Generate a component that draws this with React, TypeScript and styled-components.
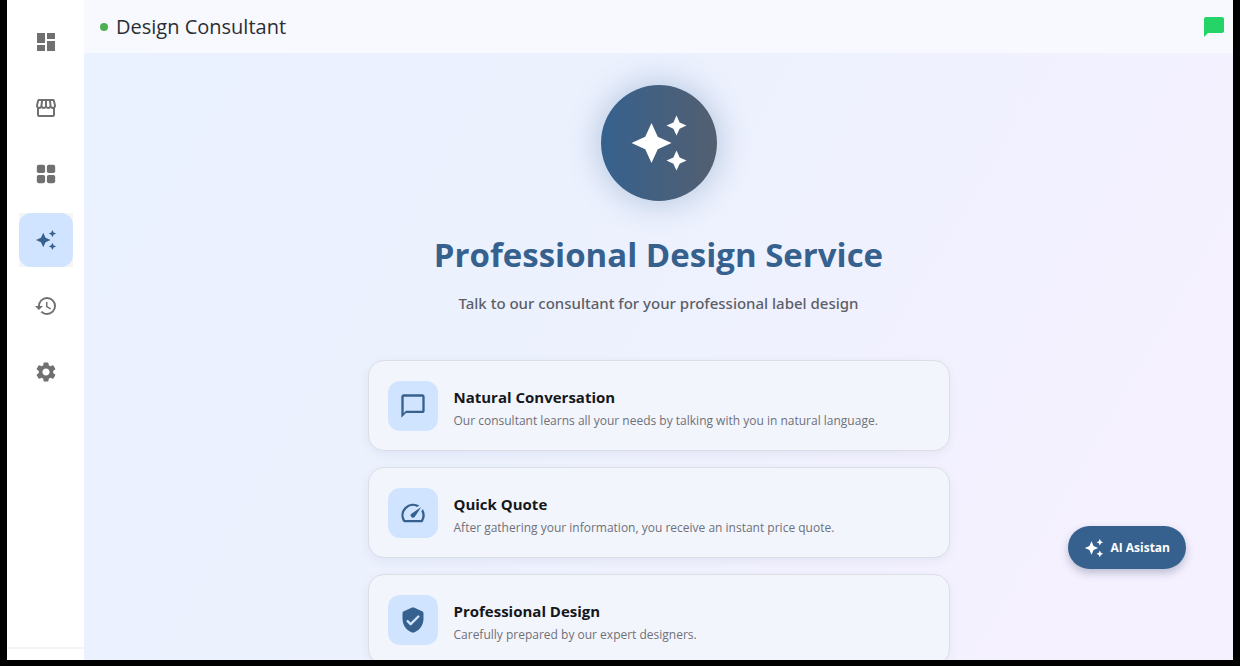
import React from "react";
import styled, { createGlobalStyle, css } from "styled-components";
import {
  MdDashboard,
  MdOutlineStorefront,
  MdAutoAwesome,
  MdHistory,
  MdSettings,
  MdChatBubble,
  MdChatBubbleOutline,
  MdSpeed,
} from "react-icons/md";

const GlobalStyle = createGlobalStyle`
  * { box-sizing: border-box; }
  body {
    margin: 0;
    background: #000;
    font-family: "Open Sans", "Noto Sans", sans-serif;
    color: #191c20;
  }
  h1, h2, h3, p, ul { margin: 0; padding: 0; }
`;

const Frame = styled.div`
  height: 100vh;
  padding: 0 7px 6px;
  background: #000;
`;

const Shell = styled.div`
  position: relative;
  display: flex;
  height: 100%;
  background: #fff;
`;

const Sidebar = styled.nav`
  flex: none;
  display: flex;
  flex-direction: column;
  justify-content: space-between;
  width: 77px;
  padding-top: 15px;
  background: #fff;
`;

const NavList = styled.ul`
  display: flex;
  flex-direction: column;
  align-items: center;
  gap: 12px;
  list-style: none;
`;

const NavItem = styled.li<{ $active?: boolean }>`
  display: flex;
  background: ${(p) => (p.$active ? "#f5f5f5" : "transparent")};
`;

const NavButton = styled.button<{ $active?: boolean }>`
  display: flex;
  align-items: center;
  justify-content: center;
  width: 54px;
  height: 54px;
  padding: 0;
  border: 0;
  border-radius: 12px;
  background: transparent;
  color: #707070;
  cursor: pointer;
  ${(p) =>
    p.$active &&
    css`
      background: #d1e4ff;
      color: #36618e;
    `}
`;

const SidebarFooter = styled.div`
  height: 13px;
  border-top: 2px solid #f3f3f3;
`;

const Content = styled.div`
  flex: 1;
  min-width: 0;
  display: flex;
  flex-direction: column;
`;

const Header = styled.header`
  flex: none;
  display: flex;
  align-items: center;
  justify-content: space-between;
  height: 53px;
  padding: 0 7px 0 16px;
  background: #f8f9ff;
`;

const HeaderTitle = styled.h2`
  display: flex;
  align-items: center;
  gap: 8px;
  font-size: 20px;
  line-height: 28px;
  font-weight: 400;
  color: #2b2e33;
`;

const StatusDot = styled.span`
  width: 8px;
  height: 8px;
  border-radius: 50%;
  background: #4caf50;
`;

const ChatButton = styled.button`
  display: flex;
  padding: 0;
  border: 0;
  background: none;
  color: #25d366;
  cursor: pointer;
`;

const Main = styled.main`
  flex: 1;
  min-height: 0;
  overflow-y: auto;
  scrollbar-width: none;
  display: flex;
  flex-direction: column;
  align-items: center;
  padding: 32px 24px 0;
  background: linear-gradient(120deg, #eaf1ff 0%, #edf1fe 45%, #f5f1ff 85%, #f5f1ff 100%);
`;

const HeroBadge = styled.div`
  flex: none;
  display: flex;
  align-items: center;
  justify-content: center;
  width: 116px;
  height: 116px;
  border-radius: 50%;
  background: linear-gradient(90deg, #36618e, #535f70);
  box-shadow: 0 0 30px 4px rgba(54, 108, 150, 0.28);
  color: #fff;
`;

const HeroTitle = styled.h1`
  margin-top: 32px;
  font-size: 33px;
  line-height: 44px;
  font-weight: 700;
  color: #36618e;
  text-align: center;
`;

const HeroText = styled.p`
  margin-top: 14px;
  font-family: "Noto Sans", "Open Sans", sans-serif;
  font-size: 15px;
  line-height: 24px;
  font-weight: 500;
  color: #5c5f66;
  text-align: center;
`;

const FeatureList = styled.ul`
  display: flex;
  flex-direction: column;
  gap: 16px;
  width: 100%;
  max-width: 582px;
  margin-top: 45px;
  padding-bottom: 32px;
  list-style: none;
`;

const FeatureCard = styled.li`
  display: flex;
  align-items: center;
  gap: 16px;
  height: 91px;
  padding: 0 19px;
  border: 1px solid #dcdee6;
  border-radius: 16px;
  background: #f3f5fd;
  box-shadow: 0 3px 10px rgba(60, 70, 110, 0.07);
`;

const FeatureIcon = styled.span`
  flex: none;
  display: flex;
  align-items: center;
  justify-content: center;
  width: 50px;
  height: 50px;
  border-radius: 12px;
  background: #d1e4ff;
  color: #36618e;
`;

const FeatureBody = styled.div`
  display: flex;
  flex-direction: column;
  gap: 2px;
  padding-top: 4px;
`;

const FeatureTitle = styled.h3`
  font-size: 15px;
  line-height: 24px;
  font-weight: 700;
  color: #15171b;
`;

const FeatureText = styled.p`
  font-size: 12px;
  line-height: 20px;
  color: #6e7178;
`;

const AssistantButton = styled.button`
  position: absolute;
  right: 47px;
  bottom: 91px;
  display: flex;
  align-items: center;
  gap: 6px;
  height: 43px;
  padding: 0 16px;
  border: 0;
  border-radius: 22px;
  background: #36618e;
  box-shadow: 0 4px 8px rgba(40, 50, 90, 0.28);
  color: #fff;
  font-family: inherit;
  font-size: 12px;
  font-weight: 700;
  cursor: pointer;
`;

function TilesIcon() {
  return (
    <svg width="22" height="22" viewBox="0 0 24 24" fill="currentColor" aria-hidden="true">
      <rect x="2" y="2" width="9" height="9" rx="2" />
      <rect x="13" y="2" width="9" height="9" rx="2" />
      <rect x="2" y="13" width="9" height="9" rx="2" />
      <rect x="13" y="13" width="9" height="9" rx="2" />
    </svg>
  );
}

function ShieldIcon() {
  return (
    <svg width="28" height="28" viewBox="0 0 24 24" fill="currentColor" aria-hidden="true">
      <path d="M11.19 1.36l-7 3.11C3.47 4.79 3 5.51 3 6.3V11c0 5.55 3.84 10.74 9 12 5.16-1.26 9-6.45 9-12V6.3c0-.79-.47-1.51-1.19-1.83l-7-3.11c-.51-.23-1.11-.23-1.62 0zm-1.9 14.93L6.7 13.7a.996.996 0 111.41-1.41L10 14.17l5.88-5.88a.996.996 0 111.41 1.41l-6.59 6.59a.996.996 0 01-1.41 0z" />
    </svg>
  );
}

const navItems = [
  { label: "Dashboard", icon: <MdDashboard size={24} /> },
  { label: "Store", icon: <MdOutlineStorefront size={24} /> },
  { label: "Catalog", icon: <TilesIcon /> },
  { label: "Design consultant", icon: <MdAutoAwesome size={22} />, active: true },
  { label: "History", icon: <MdHistory size={24} /> },
  { label: "Settings", icon: <MdSettings size={24} /> },
];

const features = [
  {
    title: "Natural Conversation",
    text: "Our consultant learns all your needs by talking with you in natural language.",
    icon: <MdChatBubbleOutline size={28} />,
  },
  {
    title: "Quick Quote",
    text: "After gathering your information, you receive an instant price quote.",
    icon: <MdSpeed size={28} />,
  },
  {
    title: "Professional Design",
    text: "Carefully prepared by our expert designers.",
    icon: <ShieldIcon />,
  },
];

export default function App() {
  return (
    <Frame>
      <GlobalStyle />
      <Shell>
        <Sidebar aria-label="Main">
          <NavList>
            {navItems.map((item) => (
              <NavItem key={item.label} $active={item.active}>
                <NavButton
                  type="button"
                  $active={item.active}
                  aria-label={item.label}
                  aria-current={item.active ? "page" : undefined}
                >
                  {item.icon}
                </NavButton>
              </NavItem>
            ))}
          </NavList>
          <SidebarFooter />
        </Sidebar>
        <Content>
          <Header>
            <HeaderTitle>
              <StatusDot />
              Design Consultant
            </HeaderTitle>
            <ChatButton type="button" aria-label="Open chat">
              <MdChatBubble size={24} />
            </ChatButton>
          </Header>
          <Main>
            <HeroBadge>
              <MdAutoAwesome size={60} />
            </HeroBadge>
            <HeroTitle>Professional Design Service</HeroTitle>
            <HeroText>Talk to our consultant for your professional label design</HeroText>
            <FeatureList>
              {features.map((feature) => (
                <FeatureCard key={feature.title}>
                  <FeatureIcon>{feature.icon}</FeatureIcon>
                  <FeatureBody>
                    <FeatureTitle>{feature.title}</FeatureTitle>
                    <FeatureText>{feature.text}</FeatureText>
                  </FeatureBody>
                </FeatureCard>
              ))}
            </FeatureList>
          </Main>
        </Content>
        <AssistantButton type="button">
          <MdAutoAwesome size={20} />
          AI Asistan
        </AssistantButton>
      </Shell>
    </Frame>
  );
}
